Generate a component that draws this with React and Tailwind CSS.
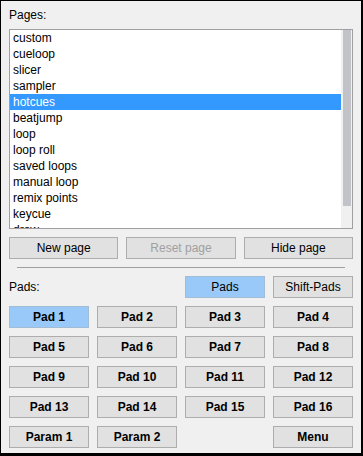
const pages = [
  "custom",
  "cueloop",
  "slicer",
  "sampler",
  "hotcues",
  "beatjump",
  "loop",
  "loop roll",
  "saved loops",
  "manual loop",
  "remix points",
  "keycue",
  "draw",
];

const pads = [
  "Pad 1", "Pad 2", "Pad 3", "Pad 4",
  "Pad 5", "Pad 6", "Pad 7", "Pad 8",
  "Pad 9", "Pad 10", "Pad 11", "Pad 12",
  "Pad 13", "Pad 14", "Pad 15", "Pad 16",
];

const Button = ({ children, active, disabled, bold }) => (
  <button
    className={
      "h-[22px] border text-[12px] leading-none " +
      (active ? "bg-[#99c9f9] border-[#a3bcd6] " : "bg-[#e1e1e1] border-[#adadad] ") +
      (disabled ? "text-[#a0a0a0] " : "text-black ") +
      (bold ? "font-bold" : "font-normal")
    }
  >
    {children}
  </button>
);

const App = () => {
  return (
    <div
      className="w-[363px] h-[456px] bg-[#f0f0f0] border-t border-l border-r-2 border-b-[3px] border-black px-2 pt-[6px] flex flex-col"
      style={{ fontFamily: '"Liberation Sans", Arial, sans-serif' }}
    >
      <div className="h-4 leading-4 text-[12px] text-black">Pages:</div>

      <div className="mt-[6px] h-[200px] border border-[#a0a0a0] bg-white flex overflow-hidden">
        <ul className="flex-1 overflow-hidden">
          {pages.map((p, i) => (
            <li
              key={p}
              className={
                "h-4 leading-4 pl-[3px] text-[12px] whitespace-nowrap " +
                (i === 4 ? "bg-[#3399ff] text-white" : "text-black")
              }
            >
              {p}
            </li>
          ))}
        </ul>
        <div className="w-[11px] bg-[#f0f0f0] pl-[2px] pr-px">
          <div className="h-[176px] bg-[#c2c3c9]" />
        </div>
      </div>

      <div className="mt-2 grid grid-cols-3 gap-2">
        <Button>New page</Button>
        <Button disabled>Reset page</Button>
        <Button>Hide page</Button>
      </div>

      <div className="mt-2 mx-2 h-px bg-[#a0a0a0]" />

      <div className="mt-2 grid grid-cols-4 gap-2 items-center">
        <div className="col-span-2 text-[12px] leading-4 text-black">Pads:</div>
        <Button active>Pads</Button>
        <Button>Shift-Pads</Button>
      </div>

      <div className="mt-2 grid grid-cols-4 gap-2">
        {pads.map((p, i) => (
          <Button key={p} bold active={i === 0}>
            {p}
          </Button>
        ))}
        <Button bold>Param 1</Button>
        <Button bold>Param 2</Button>
        <div />
        <Button bold>Menu</Button>
      </div>
    </div>
  );
};

export default App;
